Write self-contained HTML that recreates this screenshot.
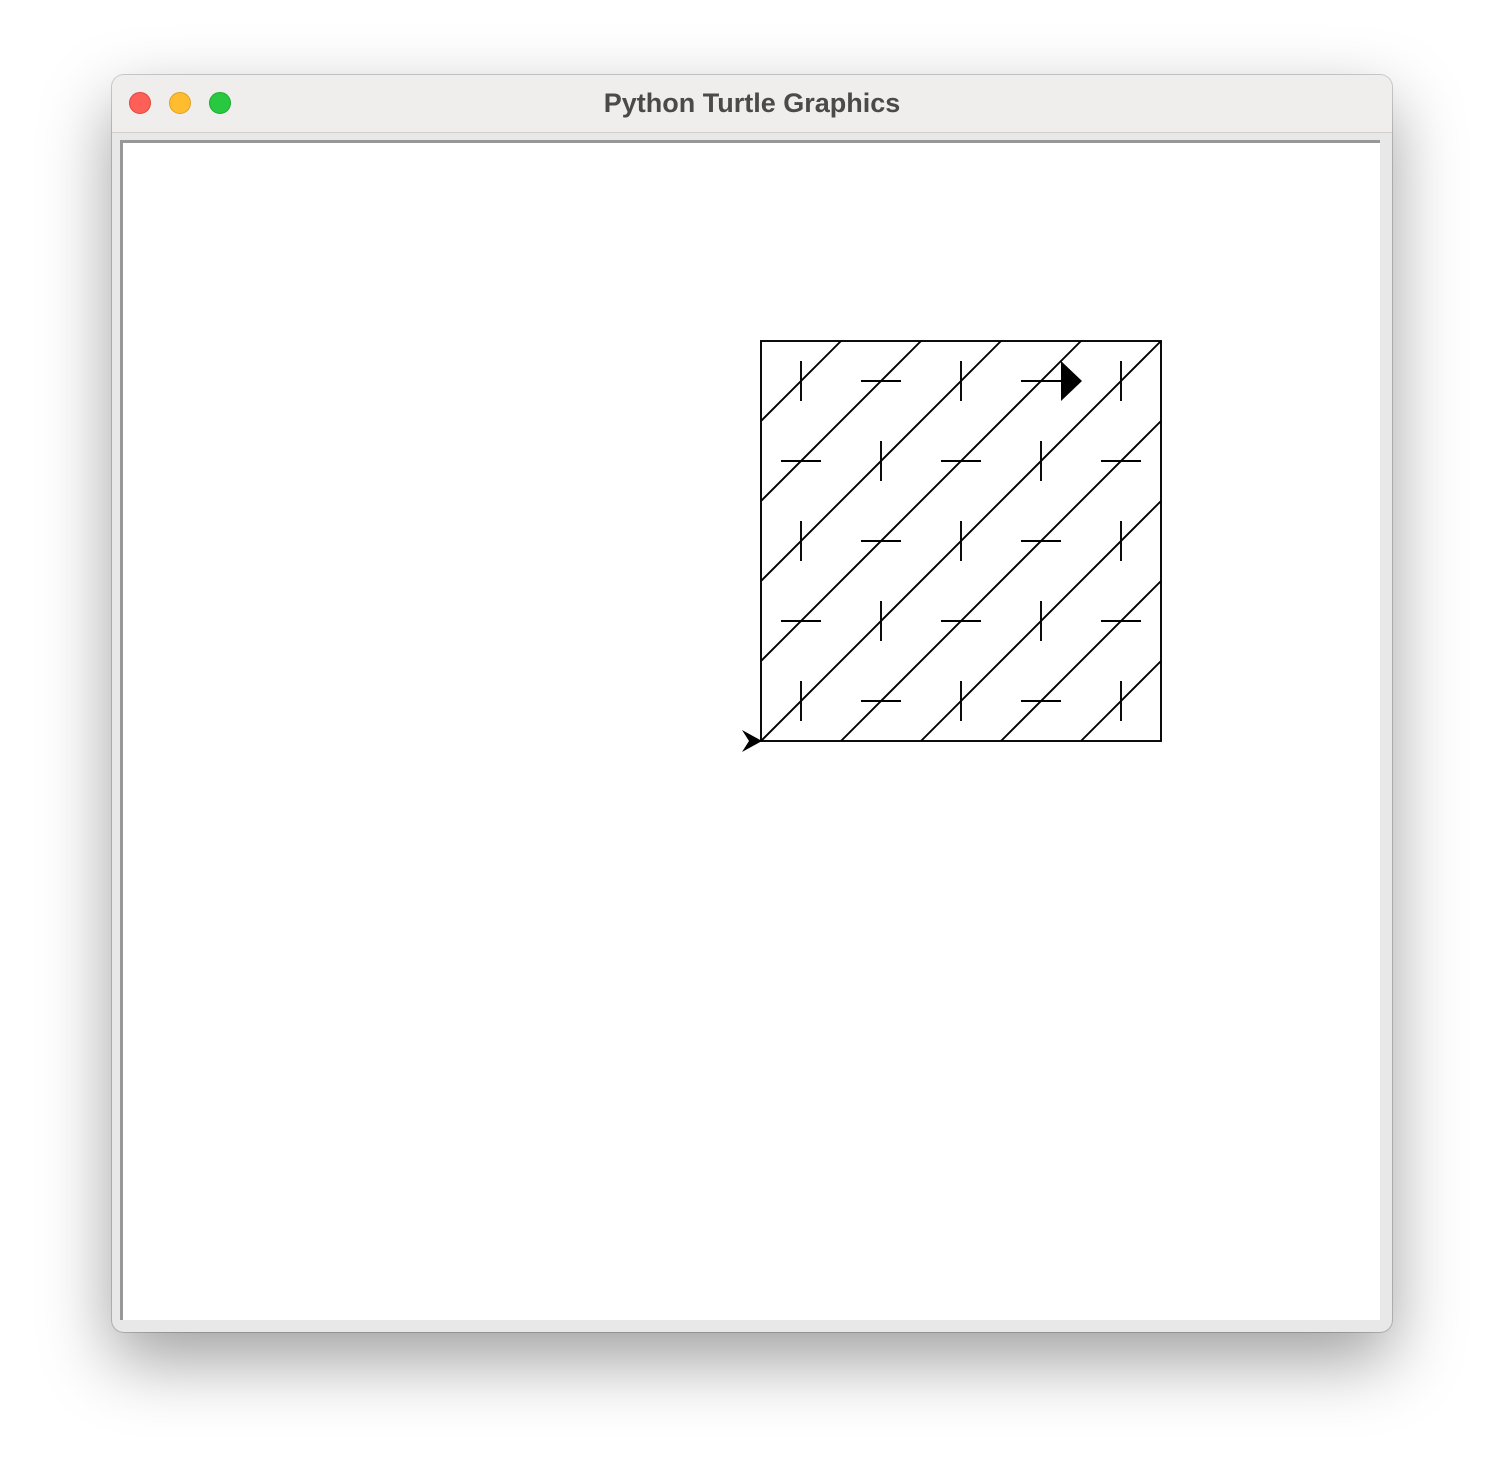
<!DOCTYPE html>
<html><head><meta charset="utf-8"><style>
html,body{margin:0;padding:0;width:1504px;height:1480px;background:#fff;overflow:hidden}
.win{position:absolute;left:112px;top:75px;width:1280px;height:1257px;border-radius:12px;background:#e8e8e8;
box-shadow:0 28px 70px rgba(0,0,0,0.38),0 0 0 1px rgba(0,0,0,0.18);overflow:hidden}
.title{position:absolute;left:0;top:0;width:1280px;height:57px;background:#efeeed;border-bottom:1px solid #d0cfce;
font-family:"Liberation Sans",sans-serif;font-weight:bold;font-size:27px;color:#4a4a4a;text-align:center;line-height:57px}
.dot{position:absolute;top:17px;width:22px;height:22px;border-radius:50%;box-sizing:border-box}
.canvas{position:absolute;left:8px;top:65px;width:1260px;height:1180px;background:#fff;border-left:3px solid #989898;border-top:3px solid #989898;box-sizing:border-box}
svg{position:absolute;left:0;top:0}
</style></head><body>
<div class="win">
<div class="title">Python Turtle Graphics</div>
<div class="dot" style="left:17px;background:#fe5f57;border:1px solid #e0443e"></div>
<div class="dot" style="left:57px;background:#febc2e;border:1px solid #dea123"></div>
<div class="dot" style="left:97px;background:#28c840;border:1px solid #1aab29"></div>
<div class="canvas"></div>
</div>
<svg width="1504" height="1480" viewBox="0 0 1504 1480">
<g stroke="#000" stroke-width="1.9" fill="none">
<rect x="761" y="341" width="400" height="400"/>
<line x1="761" y1="741" x2="1161" y2="341"/>
<line x1="761" y1="421" x2="841" y2="341"/>
<line x1="761" y1="501" x2="921" y2="341"/>
<line x1="761" y1="581" x2="1001" y2="341"/>
<line x1="761" y1="661" x2="1081" y2="341"/>
<line x1="841" y1="741" x2="1161" y2="421"/>
<line x1="921" y1="741" x2="1161" y2="501"/>
<line x1="1001" y1="741" x2="1161" y2="581"/>
<line x1="1081" y1="741" x2="1161" y2="661"/>
<path d="M801 361v40M861 381h40M961 361v40M1021 381h40M1121 361v40
M781 461h40M881 441v40M941 461h40M1041 441v40M1101 461h40
M801 521v40M861 541h40M961 521v40M1021 541h40M1121 521v40
M781 621h40M881 601v40M941 621h40M1041 601v40M1101 621h40
M801 681v40M861 701h40M961 681v40M1021 701h40M1121 681v40"/>
</g>
<polygon points="1061,361 1082,381 1061,401" fill="#000"/>
<polygon points="762,741 742,730 749,741 742,752" fill="#000"/>
</svg>
</body></html>
